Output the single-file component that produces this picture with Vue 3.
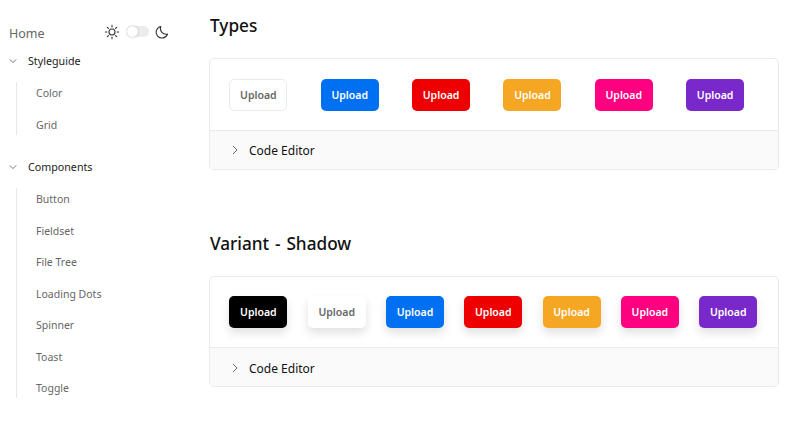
<template>
  <div class="page">
    <aside class="sidebar">
      <div class="top">
        <a class="home">Home</a>
        <div class="theme">
          <svg class="sun" width="16" height="16" viewBox="0 0 24 24" fill="none" stroke="#333" stroke-width="1.6" stroke-linecap="round">
            <circle cx="12" cy="12" r="4.5" />
            <path d="M12 2v2.5M12 19.5V22M2 12h2.5M19.5 12H22M4.9 4.9l1.8 1.8M17.3 17.3l1.8 1.8M4.9 19.1l1.8-1.8M17.3 6.7l1.8-1.8" />
          </svg>
          <span class="switch"><span class="knob"></span></span>
          <svg class="moon" width="14" height="14" viewBox="0 0 24 24" fill="none" stroke="#333" stroke-width="1.9" stroke-linecap="round" stroke-linejoin="round">
            <path d="M10 2.5a9.8 9.8 0 0 0 11.5 13A10 10 0 1 1 10 2.5z" />
          </svg>
        </div>
      </div>

      <div v-for="group in groups" :key="group.name" class="group">
        <div class="group-title">
          <svg width="8" height="8" viewBox="0 0 8 8" fill="none" stroke="#666" stroke-width="0.9">
            <path d="M0.8 2.4 4 5.6l3.2-3.2" />
          </svg>
          <span>{{ group.name }}</span>
        </div>
        <ul class="links">
          <li v-for="link in group.links" :key="link">{{ link }}</li>
        </ul>
      </div>
    </aside>

    <main class="content">
      <section v-for="demo in demos" :key="demo.title" class="demo" :class="demo.kind">
        <h2>{{ demo.title }}</h2>
        <div class="card">
          <div class="buttons">
            <button v-for="btn in demo.buttons" :key="btn" class="btn" :class="btn">Upload</button>
          </div>
          <div class="code-bar">
            <svg width="8" height="10" viewBox="0 0 8 10" fill="none" stroke="#555" stroke-width="0.9">
              <path d="M2 1l4 4-4 4" />
            </svg>
            <span>Code Editor</span>
          </div>
        </div>
      </section>
    </main>
  </div>
</template>

<script setup>
const groups = [
  { name: 'Styleguide', links: ['Color', 'Grid'] },
  { name: 'Components', links: ['Button', 'Fieldset', 'File Tree', 'Loading Dots', 'Spinner', 'Toast', 'Toggle'] }
]

const demos = [
  { title: 'Types', kind: 'flat', buttons: ['default', 'primary', 'error', 'warning', 'pink', 'purple'] },
  { title: 'Variant - Shadow', kind: 'shadow', buttons: ['black', 'white', 'primary', 'error', 'warning', 'pink', 'purple'] }
]
</script>

<style scoped>
.page {
  display: flex;
  width: 790px;
  height: 425px;
  overflow: hidden;
  background: #fff;
  font-family: "Noto Sans", "Open Sans", sans-serif;
}

.sidebar {
  width: 209px;
  flex-shrink: 0;
  padding: 23px 0 0 9px;
  box-sizing: border-box;
}

.top {
  display: flex;
  align-items: center;
  height: 20px;
  margin-bottom: 8px;
}
.home {
  width: 96px;
  font-size: 12.5px;
  color: #666;
}
.theme {
  display: flex;
  align-items: center;
  margin-top: -3px;
}
.sun {
  margin-left: -1px;
}
.switch {
  width: 22px;
  height: 11px;
  margin: 0 6px 0 7px;
  border-radius: 6px;
  background: #ececec;
  position: relative;
}
.knob {
  position: absolute;
  left: 0;
  top: 0;
  width: 11px;
  height: 11px;
  border-radius: 50%;
  background: #fff;
  box-shadow: 0 0 2px rgba(0, 0, 0, 0.35);
}

.group {
  margin-bottom: 22.5px;
}
.group-title {
  display: flex;
  align-items: center;
  gap: 11px;
  height: 20px;
  font-size: 10.7px;
  color: #222;
}
.links {
  list-style: none;
  margin: 11px 0 0 7px;
  padding: 0;
  border-left: 1px solid #e8e8e8;
}
.links li {
  height: 21px;
  line-height: 22.4px;
  margin-bottom: 10.5px;
  padding-left: 19px;
  font-size: 10.5px;
  color: #666;
}
.links li:last-child {
  margin-bottom: 0;
}

.content {
  width: 570px;
  padding-top: 15px;
}
.demo {
  margin-bottom: 63px;
}
h2 {
  margin: 0 0 18px;
  padding-left: 1px;
  height: 25px;
  line-height: 22px;
  font-size: 17.2px;
  font-weight: 500;
  word-spacing: 1.4px;
  color: #111;
}
.card {
  border: 1px solid #eaeaea;
  border-radius: 5px;
  overflow: hidden;
}
.buttons {
  display: flex;
  padding: 20px 19px 19px 19.4px;
  border-bottom: 1px solid #eaeaea;
}
.flat .buttons {
  gap: 33.35px;
}
.shadow .buttons {
  gap: 20.3px;
  padding-top: 19px;
}
.btn {
  width: 58px;
  height: 32px;
  padding: 0;
  border: 1px solid transparent;
  border-radius: 5px;
  font-family: inherit;
  font-size: 10.5px;
  font-weight: 600;
  color: #fff;
}
.shadow .btn {
  box-shadow: 0 5px 10px rgba(0, 0, 0, 0.12);
}
.default {
  background: #fff;
  border-color: #eaeaea;
  color: #666;
}
.white {
  background: #fff;
  color: #666;
}
.black {
  background: #000;
}
.primary {
  background: #0070f3;
}
.error {
  background: #e00;
}
.warning {
  background: #f5a623;
}
.pink {
  background: #ff0080;
}
.purple {
  background: #7928ca;
}
.code-bar {
  display: flex;
  align-items: center;
  gap: 10px;
  height: 38px;
  box-sizing: border-box;
  padding-left: 21px;
  background: #fafafa;
  font-size: 12px;
  color: #111;
}
.shadow .code-bar {
  padding-top: 2px;
}
</style>
